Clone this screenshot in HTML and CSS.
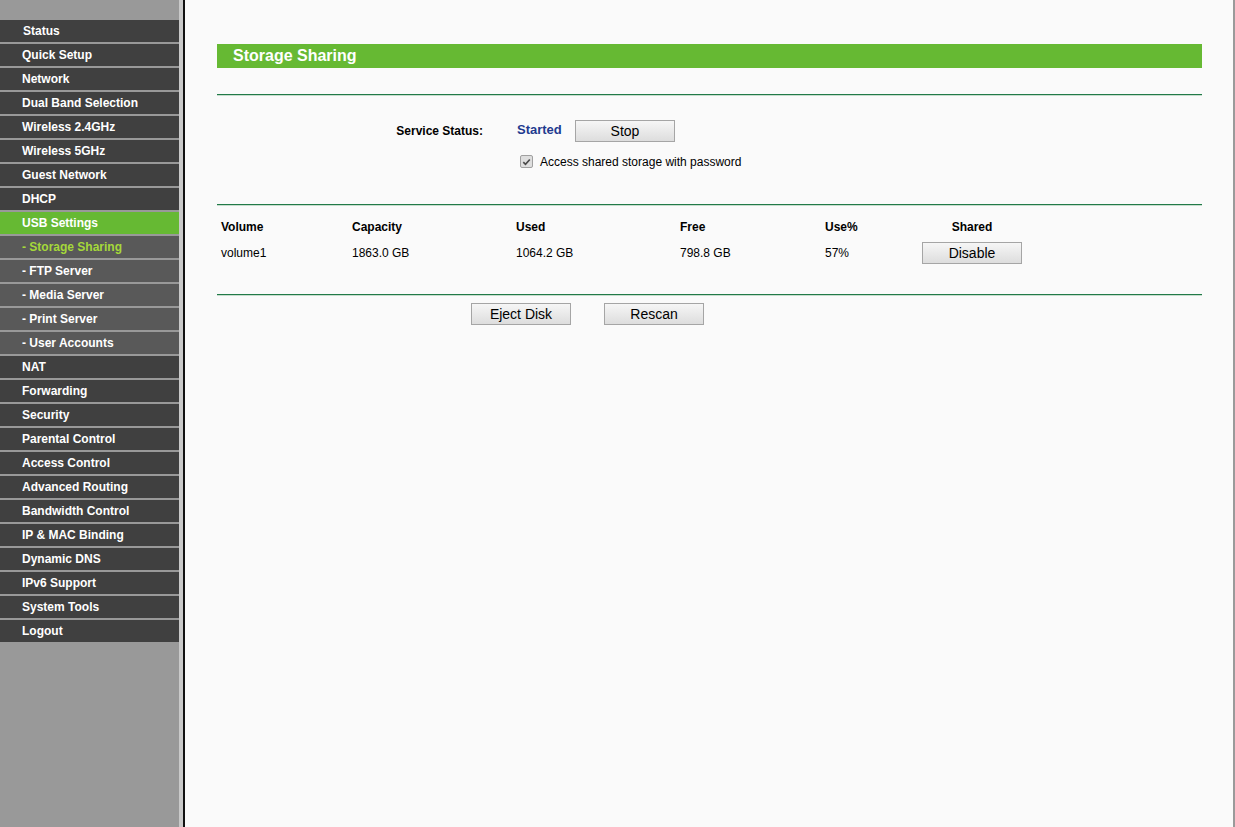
FILE: index.html
```
<!DOCTYPE html>
<html>
<head>
<meta charset="utf-8">
<title>Storage Sharing</title>
<link rel="stylesheet" href="styles.css">
</head>
<body>
<div class="page">
  <nav class="sidebar">
    <ul class="menu">
      <li class="item">Status</li>
      <li class="item">Quick Setup</li>
      <li class="item">Network</li>
      <li class="item">Dual Band Selection</li>
      <li class="item">Wireless 2.4GHz</li>
      <li class="item">Wireless 5GHz</li>
      <li class="item">Guest Network</li>
      <li class="item">DHCP</li>
      <li class="item active">USB Settings</li>
      <li class="item sub current">- Storage Sharing</li>
      <li class="item sub">- FTP Server</li>
      <li class="item sub">- Media Server</li>
      <li class="item sub">- Print Server</li>
      <li class="item sub">- User Accounts</li>
      <li class="item">NAT</li>
      <li class="item">Forwarding</li>
      <li class="item">Security</li>
      <li class="item">Parental Control</li>
      <li class="item">Access Control</li>
      <li class="item">Advanced Routing</li>
      <li class="item">Bandwidth Control</li>
      <li class="item">IP &amp; MAC Binding</li>
      <li class="item">Dynamic DNS</li>
      <li class="item">IPv6 Support</li>
      <li class="item">System Tools</li>
      <li class="item">Logout</li>
    </ul>
  </nav>
  <div class="strip"></div>
  <main class="main">
    <h1 class="title">Storage Sharing</h1>
    <div class="rule"></div>
    <div class="status-row">
      <span class="label">Service Status:</span>
      <span class="started">Started</span>
      <button class="btn">Stop</button>
    </div>
    <div class="check-row">
      <span class="checkbox"><svg viewBox="0 0 12 12" width="12" height="12"><path d="M2.5 6.2 L4.9 8.6 L9.6 3.2" fill="none" stroke="#4a4a4a" stroke-width="1.8"/></svg></span>
      <span class="check-text">Access shared storage with password</span>
    </div>
    <div class="rule rule2"></div>
    <table class="vol-table">
      <colgroup>
        <col class="c1"><col class="c2"><col class="c3"><col class="c4"><col class="c5"><col class="c6"><col>
      </colgroup>
      <thead>
        <tr><th>Volume</th><th>Capacity</th><th>Used</th><th>Free</th><th>Use%</th><th class="center">Shared</th><th></th></tr>
      </thead>
      <tbody>
        <tr><td>volume1</td><td>1863.0 GB</td><td>1064.2 GB</td><td>798.8 GB</td><td>57%</td><td class="center"><button class="btn">Disable</button></td><td></td></tr>
      </tbody>
    </table>
    <div class="rule rule3"></div>
    <div class="actions">
      <button class="btn">Eject Disk</button>
      <button class="btn">Rescan</button>
    </div>
  </main>
</div>
</body>
</html>
```
FILE: styles.css
```
html, body {
  margin: 0;
  padding: 0;
  height: 100%;
}
body {
  font-family: "Liberation Sans", Arial, sans-serif;
  font-size: 12px;
  color: #000;
  background: #fafafa;
}
.page {
  display: flex;
  height: 827px;
  box-sizing: border-box;
  border-right: 2px solid #9a9a9a;
}
.sidebar {
  width: 179px;
  flex: none;
  background: #999999;
  padding-top: 20px;
}
.menu {
  list-style: none;
  margin: 0;
  padding: 0;
}
.item {
  height: 22px;
  line-height: 22px;
  margin-bottom: 2px;
  background: #404040;
  color: #fff;
  font-weight: bold;
  font-size: 12px;
  padding-left: 22px;
  white-space: nowrap;
}
.item:first-child {
  padding-left: 23px;
}
.item.sub {
  background: #595959;
}
.item.active {
  background: #66b933;
}
.item.current {
  color: #a5d83a;
}
.strip {
  width: 4px;
  flex: none;
  background: #c9c9c9;
  border-right: 2px solid #111;
}
.main {
  flex: 1;
  padding: 44px 31px 0 32px;
  background: #fafafa;
}
.title {
  margin: 0;
  height: 24px;
  line-height: 24px;
  background: #66b933;
  color: #fff;
  font-size: 16px;
  font-weight: bold;
  padding-left: 16px;
}
.rule {
  height: 1px;
  background: #217a48;
  border-bottom: 1px solid #c6dccd;
  margin-top: 26px;
}
.status-row {
  display: flex;
  align-items: center;
  margin-top: 24px;
  height: 22px;
}
.label {
  width: 266px;
  text-align: right;
  font-weight: bold;
}
.started {
  margin-left: 34px;
  width: 58px;
  color: #1f3a8f;
  font-weight: bold;
  font-size: 13px;
  align-self: flex-start;
  line-height: 20px;
}
.btn {
  width: 100px;
  height: 22px;
  padding: 0;
  font-family: "Liberation Sans", Arial, sans-serif;
  font-size: 14px;
  color: #000;
  border: 1px solid #a5a5a5;
  border-radius: 0;
  background: linear-gradient(#f6f6f6, #dddddd);
}
.check-row {
  display: flex;
  align-items: center;
  margin-top: 12px;
  padding-left: 303px;
  height: 15px;
}
.checkbox {
  width: 11px;
  height: 11px;
  border: 1px solid #a0a0a0;
  border-radius: 2px;
  background: #dedede;
  display: flex;
  align-items: center;
  justify-content: center;
}
.check-text {
  margin-left: 7px;
}
.rule2 {
  margin-top: 35px;
}
.vol-table {
  border-collapse: collapse;
  width: 100%;
  margin-top: 12px;
}
.c1 { width: 131px; }
.c2 { width: 164px; }
.c3 { width: 164px; }
.c4 { width: 145px; }
.c5 { width: 96px; }
.c6 { width: 110px; }
.vol-table th, .vol-table td {
  text-align: left;
  padding: 0 0 0 4px;
  font-size: 12px;
}
.vol-table th {
  font-weight: bold;
  height: 18px;
}
.vol-table td {
  height: 34px;
}
.vol-table .center {
  text-align: center;
  padding-left: 0;
}
.rule3 {
  margin-top: 24px;
}
.actions {
  display: flex;
  gap: 33px;
  padding-left: 254px;
  margin-top: 7px;
}
```
